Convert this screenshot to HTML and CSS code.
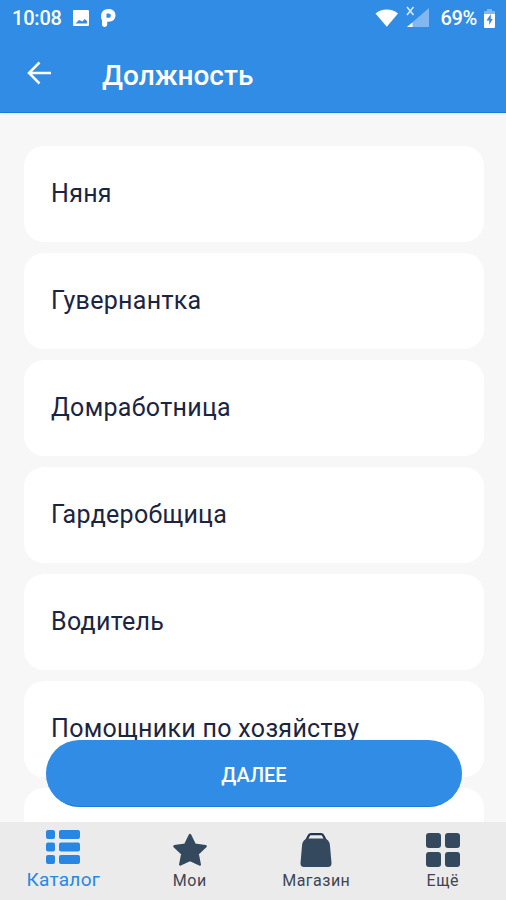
FILE: index.html
```html
<!DOCTYPE html>
<html lang="ru">
<head>
    <meta charset="UTF-8">
    <meta name="viewport" content="width=device-width, initial-scale=1.0">
    <title>Должность</title>
    <link rel="stylesheet" href="styles.css">
</head>
<body>
    <header class="header">
        <div class="status-bar">
            <span class="time">10:08</span>
            <svg class="icon-image" width="16" height="16" viewBox="0 0 16 16">
                <path fill="#fff" fill-rule="evenodd" d="M1 0h14q1 0 1 1v14q0 1-1 1H1q-1 0-1-1V1q0-1 1-1zM2.500 13.500h11.500V11l-2.500-2-2 2.500L6 10z"/>
            </svg>
            <svg class="icon-p" width="15" height="18" viewBox="0 0 15 18">
                <path fill="#fff" fill-rule="evenodd" d="M7.500 0C12 0 14.500 2.700 14.500 6.300c0 3.800-2.700 6.400-6.700 6.400H6.200v2.600C6.200 17 5.100 18 3.600 18S1 17 1 15.300v-4C.3 10.200 0 8.500 0 7 0 2.800 3 0 7.500 0zM5.500 4.500v4.300h2c1.500 0 2.300-.8 2.300-2.100s-.8-2.200-2.300-2.200z"/>
            </svg>
            <div class="status-right">
                <svg width="24" height="18" viewBox="0 0 24 18">
                    <path fill="#fff" d="M.5 4.500C3.500 2 7.500.5 11.800.5s8.300 1.500 11.200 4L11.800 17.800z"/>
                </svg>
                <svg class="icon-signal" width="24" height="22" viewBox="0 0 24 22">
                    <path fill="#83b7ef" d="M23 2v19H1z"/>
                    <path fill="#fff" d="M6.500 16.500V21H1z"/>
                    <path stroke="#dcecff" stroke-width="1.500" d="M1 1l6.500 8M7.500 1L1 9"/>
                </svg>
                <span class="percent">69%</span>
                <svg class="icon-battery" width="11" height="19" viewBox="0 0 11 19">
                    <path fill="#83b7ef" d="M3 0h5v2h2q1 0 1 1v3H0V3q0-1 1-1h2z"/>
                    <path fill="#fff" d="M0 5h11v13q0 1-1 1H1q-1 0-1-1z"/>
                    <path fill="#318ce5" d="M6.800 5L2.500 11.500h2.700V16l3.500-6H6.800z"/>
                </svg>
            </div>
        </div>
        <div class="toolbar">
            <svg class="back" width="24" height="24" viewBox="0 0 24 24">
                <path fill="none" stroke="#fff" stroke-width="2.500" d="M12.500 1.500L2 12l10.500 10.500M2 12h22"/>
            </svg>
            <h1 class="title">Должность</h1>
        </div>
    </header>

    <main class="content">
        <ul class="list">
            <li class="card">Няня</li>
            <li class="card">Гувернантка</li>
            <li class="card">Домработница</li>
            <li class="card">Гардеробщица</li>
            <li class="card">Водитель</li>
            <li class="card">Помощники по хозяйству</li>
            <li class="card"></li>
        </ul>
        <button class="next-btn">ДАЛЕЕ</button>
    </main>

    <nav class="tabs">
        <a class="tab active">
            <svg width="34" height="34" viewBox="0 0 34 34" fill="currentColor">
                <rect x="0" y="0" width="9" height="9" rx="2"/>
                <rect x="13" y="0" width="21" height="9" rx="2"/>
                <rect x="0" y="12.500" width="9" height="9" rx="2"/>
                <rect x="13" y="12.500" width="21" height="9" rx="2"/>
                <rect x="0" y="25" width="9" height="9" rx="2"/>
                <rect x="13" y="25" width="21" height="9" rx="2"/>
            </svg>
            <span class="tab-label">Каталог</span>
        </a>
        <a class="tab">
            <svg width="34" height="34" viewBox="0 0 34 34" fill="#34495e" stroke="#34495e" stroke-width="2.500" stroke-linejoin="round">
                <path d="M17 2l4.800 9.800 10.700 1.500-7.900 7.500 2.100 10.700L17 26.800l-9.700 4.700 2.100-10.700-7.900-7.500 10.700-1.500z"/>
            </svg>
            <span class="tab-label">Мои</span>
        </a>
        <a class="tab">
            <svg width="34" height="34" viewBox="0 0 34 34">
                <path fill="none" stroke="#1f3355" stroke-width="2.200" d="M7 8l2.500-5q.7-1.800 2.300-1.800h10.400q1.600 0 2.300 1.800L27 8"/>
                <path fill="#34495e" d="M9.500 5.500h15q6 0 6.500 7.500L32.500 30q.2 4-3.500 4H5q-3.700 0-3.500-4L3 13q.5-7.500 6.500-7.500z"/>
            </svg>
            <span class="tab-label">Магазин</span>
        </a>
        <a class="tab">
            <svg width="34" height="34" viewBox="0 0 34 34" fill="#34495e">
                <rect x="0" y="0" width="15" height="15" rx="3"/>
                <rect x="19" y="0" width="15" height="15" rx="3"/>
                <rect x="0" y="19" width="15" height="15" rx="3"/>
                <rect x="19" y="19" width="15" height="15" rx="3"/>
            </svg>
            <span class="tab-label">Ещё</span>
        </a>
    </nav>
</body>
</html>
```

FILE: styles.css
```css
* {
    box-sizing: border-box;
}
body {
    margin: 0;
    height: 100vh;
    display: flex;
    flex-direction: column;
    overflow: hidden;
    font-family: Roboto, "Noto Sans", sans-serif;
    background-color: #f7f7f7;
}
.header {
    height: 113px;
    flex-shrink: 0;
    background-color: #318ce5;
    border-bottom: 1px solid #1b7bdb;
    box-shadow: 0 1px 2px rgba(0, 0, 0, 0.08);
    color: white;
}
.status-bar {
    display: flex;
    align-items: center;
    height: 36px;
    padding: 0 11px 0 12px;
    font-size: 20px;
    font-weight: 500;
}
.time {
    letter-spacing: -0.2px;
}
.icon-image {
    margin-left: 11px;
}
.icon-p {
    margin-left: 12px;
}
.status-right {
    display: flex;
    align-items: center;
    margin-left: auto;
}
.icon-signal {
    margin: 0 10px 2px 7px;
}
.percent {
    letter-spacing: -0.3px;
}
.icon-battery {
    margin-left: 7px;
}
.toolbar {
    display: flex;
    align-items: center;
    height: 76px;
    padding-left: 27px;
}
.back {
    margin-bottom: 3px;
}
.title {
    margin: 3px 0 0 51px;
    font-size: 28px;
    font-weight: 500;
    line-height: 32px;
}
.content {
    position: relative;
    flex: 1;
    min-height: 0;
    overflow: hidden;
}
.list {
    display: flex;
    flex-direction: column;
    gap: 11px;
    margin: 0;
    padding: 33px 22px 0 24px;
    list-style: none;
}
.card {
    height: 96px;
    padding: 33px 27px;
    border-radius: 20px;
    background-color: white;
    color: #1b2440;
    font-size: 25px;
    line-height: 30px;
    letter-spacing: 0.3px;
}
.next-btn {
    position: absolute;
    left: 46px;
    right: 44px;
    bottom: 15px;
    height: 67px;
    padding-top: 4px;
    border: none;
    border-bottom: 1px solid #1b7bdb;
    border-radius: 34px;
    background-color: #318ce5;
    color: white;
    font-family: inherit;
    font-size: 20px;
    font-weight: 500;
}
.tabs {
    display: flex;
    height: 78px;
    flex-shrink: 0;
    background-color: #ebebeb;
}
.tab {
    flex: 1;
    display: flex;
    flex-direction: column;
    align-items: center;
    padding-top: 11px;
    color: #3c4654;
    font-size: 16px;
}
.tab-label {
    margin-top: 4px;
    line-height: 20px;
    letter-spacing: 0.5px;
}
.tab.active {
    padding-top: 8px;
    color: #2787e3;
    font-size: 19px;
}
.active .tab-label {
    margin-top: 5px;
    line-height: 22px;
    letter-spacing: 0.3px;
}
```
